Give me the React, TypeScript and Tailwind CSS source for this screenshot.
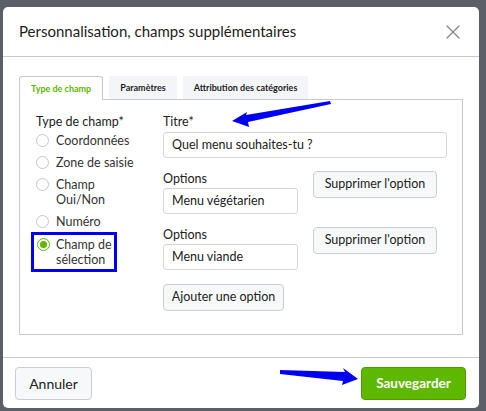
import React from "react";
import { X } from "lucide-react";

const font = { fontFamily: '"Source Sans Pro", Lato, "Noto Sans", sans-serif' };

const Radio = ({ checked }: { checked?: boolean }) => (
  <span
    className={
      "mt-[1px] flex h-[13px] w-[13px] shrink-0 items-center justify-center rounded-full border bg-white " +
      (checked ? "border-[#5cb800]" : "border-[#c4c8cc]")
    }
  >
    {checked && <span className="h-[7px] w-[7px] rounded-full bg-[#5cb800]" />}
  </span>
);

const radios = ["Coordonnées", "Zone de saisie", "Champ Oui/Non", "Numéro"];

const GhostButton = ({ children, className = "" }: { children: React.ReactNode; className?: string }) => (
  <button
    className={
      "flex h-[27px] items-center justify-center whitespace-nowrap rounded-[4px] border border-[#c9ced4] bg-[#f7f8f9] text-[12.5px] text-[#222] " +
      className
    }
  >
    {children}
  </button>
);

const App = () => {
  return (
    <div className="relative h-[411px] w-[486px] overflow-hidden bg-[#5b5f67] pl-[3px] pr-[7px] pt-[7px]" style={font}>
      <div className="flex h-[401px] flex-col rounded-[5px] bg-white">
        {/* header */}
        <div className="flex h-[50px] shrink-0 items-center justify-between border-b border-[#c5cad0] pl-4 pr-[14px]">
          <h2 className="text-[15px] text-[#1d1d1d]">Personnalisation, champs supplémentaires</h2>
          <X size={24} className="text-[#80868d]" strokeWidth={1.3} />
        </div>

        {/* body */}
        <div className="flex-1 px-4 pt-[19px]">
          <div className="flex h-[23px] items-end gap-[6px] text-[9px] font-bold">
            <div className="-mb-px flex h-[24px] items-center rounded-t-[3px] border border-b-0 border-[#c5cad0] bg-white px-[11px] text-[#5cb800]">
              Type de champ
            </div>
            <div className="flex h-[23px] items-center bg-[#f3f5f8] px-[11px] text-[#1d1d1d]">Paramètres</div>
            <div className="flex h-[23px] items-center bg-[#f3f5f8] px-[11px] text-[#1d1d1d]">
              Attribution des catégories
            </div>
          </div>

          <div className="flex h-[236px] border border-[#c5cad0] pl-4 pr-[15px] pt-[14px] text-[12.5px] text-[#222]">
            {/* left */}
            <div className="w-[127px] shrink-0">
              <p className="leading-[16px]">Type de champ*</p>
              <div className="mt-[3px] flex flex-col gap-[7px]">
                {radios.map((r) => (
                  <label key={r} className="flex items-start gap-[7px] leading-[15px] text-[#333]">
                    <Radio />
                    <span className={r === "Champ Oui/Non" ? "w-[50px]" : ""}>{r}</span>
                  </label>
                ))}
                <label className="-ml-[5px] -mt-[4px] flex w-[86px] items-start gap-[6px] border-[3px] border-[#0000f0] pb-[2px] pl-[3px] pt-[2px] leading-[15px] text-[#333]">
                  <Radio checked />
                  <span className="w-[58px]">Champ de sélection</span>
                </label>
              </div>
            </div>

            {/* right */}
            <div className="flex-1">
              <p className="leading-[16px]">Titre*</p>
              <div className="mt-[2px] flex h-[26px] items-center rounded-[3px] border border-[#d3d7dc] px-[8px] text-[#222]">
                Quel menu souhaites-tu ?
              </div>

              <div className="mt-[13px] flex items-start gap-[15px]">
                <div className="w-[135px]">
                  <p className="leading-[16px]">Options</p>
                  <div className="mt-[1px] flex h-[26px] items-center rounded-[3px] border border-[#d3d7dc] px-[8px]">
                    Menu végétarien
                  </div>
                </div>
                <GhostButton className="w-[124px]">Supprimer l'option</GhostButton>
              </div>

              <div className="mt-[13px] flex items-start gap-[15px]">
                <div className="w-[135px]">
                  <p className="leading-[16px]">Options</p>
                  <div className="mt-[1px] flex h-[26px] items-center rounded-[3px] border border-[#d3d7dc] px-[8px]">
                    Menu viande
                  </div>
                </div>
                <GhostButton className="w-[124px]">Supprimer l'option</GhostButton>
              </div>

              <GhostButton className="mt-[14px] w-[121px]">Ajouter une option</GhostButton>
            </div>
          </div>
        </div>

        {/* footer */}
        <div className="flex h-[51px] shrink-0 items-center justify-between border-t border-[#c5cad0] pl-3 pr-[13px]">
          <button className="h-[33px] w-[77px] rounded-[4px] border border-[#c9ced4] bg-[#f7f8f9] text-[14px] text-[#222]">
            Annuler
          </button>
          <button className="h-[33px] w-[105px] rounded-[4px] border border-[#4f9a00] bg-[#5fb800] text-[13.5px] font-bold text-white">
            Sauvegarder
          </button>
        </div>
      </div>

      {/* annotation arrows */}
      <svg className="pointer-events-none absolute left-0 top-0" width="486" height="411">
        <polygon points="330,101 246,115 247,112 232,121 249,127 248,122 331,104" fill="#0000f0" />
        <polygon points="280,370 345,372 343,368 358,379 342,385 343,381 280,374" fill="#0000f0" />
      </svg>
    </div>
  );
};

export default App;
